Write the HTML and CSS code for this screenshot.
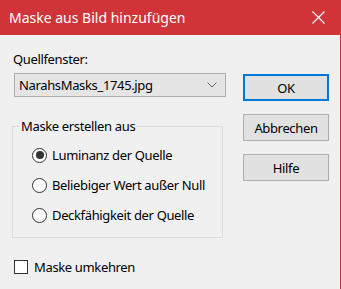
FILE: index.html
```html
<!DOCTYPE html>
<html lang="de">
	<head>
		<meta charset="utf-8" />
		<title>Maske aus Bild hinzufügen</title>
		<link rel="stylesheet" href="styles.css">
	</head>
	<body>
		<div class="window">
			<div class="titlebar">
				<span class="title">Maske aus Bild hinzufügen</span>
				<svg class="close" width="13" height="13" viewBox="0 0 13 13">
					<path d="M0.5 0.5 L12.5 12.5 M12.5 0.5 L0.5 12.5" stroke="#fff" stroke-width="1.2" fill="none" />
				</svg>
			</div>
			<div class="content">
				<div class="main">
					<div class="label">Quellfenster:</div>
					<div class="select">
						<span>NarahsMasks_1745.jpg</span>
						<svg width="10" height="6" viewBox="0 0 10 6">
							<path d="M0.5 0.5 L5 5 L9.5 0.5" stroke="#606060" stroke-width="1" fill="none" />
						</svg>
					</div>
					<fieldset class="group">
						<legend>Maske erstellen aus</legend>
						<div class="option"><span class="radio checked"></span>Luminanz der Quelle</div>
						<div class="option"><span class="radio"></span>Beliebiger Wert außer Null</div>
						<div class="option"><span class="radio"></span>Deckfähigkeit der Quelle</div>
					</fieldset>
					<div class="check"><span class="box"></span>Maske umkehren</div>
				</div>
				<div class="buttons">
					<div class="btn default">OK</div>
					<div class="btn">Abbrechen</div>
					<div class="btn">Hilfe</div>
				</div>
			</div>
		</div>
	</body>
</html>
```

FILE: styles.css
```css
body, html {
	margin:0;
	padding:0;
	background:#f0f0f0;
	font-family:"Noto Sans", sans-serif;
	font-size:13px;
	letter-spacing:-0.35px;
	color:#000;
}
.window {
	width:340px;
	height:289px;
	border-right:1px solid #d13438;
}
.titlebar {
	height:35px;
	background:#d13438;
	color:#fff;
	font-size:14px;
	letter-spacing:0;
	display:flex;
	align-items:center;
	justify-content:space-between;
	padding:0 15px 0 9px;
}
.close {
	display:block;
}
.content {
	display:flex;
}
.main {
	width:214px;
	padding-left:12px;
	white-space:nowrap;
}
.label {
	margin-top:16px;
	line-height:16px;
	padding-left:1px;
}
.select {
	margin-top:6px;
	margin-left:2px;
	height:22px;
	border:1px solid #adadad;
	background:#e5e5e5;
	display:flex;
	align-items:center;
	justify-content:space-between;
	padding:0 8px 0 4px;
}
.select svg {
	display:block;
}
.group {
	margin:21px 3px 0 0;
	padding:6px 0 7px 7px;
	border:1px solid #dcdcdc;
}
.group legend {
	padding:0 1px;
	line-height:16px;
}
.option {
	display:flex;
	align-items:center;
	height:30px;
	padding-left:12px;
}
.radio {
	width:13px;
	height:13px;
	border:1px solid #333;
	border-radius:50%;
	background:#fff;
	margin-right:5px;
	display:flex;
	align-items:center;
	justify-content:center;
}
.radio.checked:after {
	content:"";
	width:8px;
	height:8px;
	border-radius:50%;
	background:#333;
}
.check {
	display:flex;
	align-items:center;
	margin:21px 0 0 2px;
	line-height:16px;
}
.box {
	width:12px;
	height:12px;
	border:1px solid #333;
	background:#fff;
	margin-right:6px;
}
.buttons {
	margin-left:17px;
	padding-top:39px;
	display:flex;
	flex-direction:column;
	gap:13px;
}
.btn {
	width:84px;
	height:25px;
	border:1px solid #adadad;
	background:#e1e1e1;
	display:flex;
	align-items:center;
	justify-content:center;
}
.btn.default {
	width:82px;
	height:23px;
	border:2px solid #0078d7;
}
```
